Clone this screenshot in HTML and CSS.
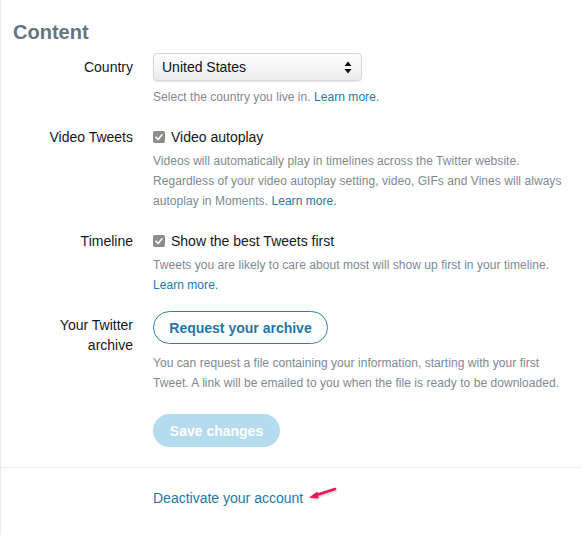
FILE: index.html
```html
<!DOCTYPE html>
<html>
<head>
<meta charset="utf-8">
<link rel="stylesheet" href="styles.css">
</head>
<body>
<div class="page">
  <h2 class="title">Content</h2>
  <div class="form">
    <div class="row row-country">
      <div class="label">Country</div>
      <div class="control">
        <div class="select">
          <span>United States</span>
          <svg class="select-arrows" width="8" height="13" viewBox="0 0 8 13"><path d="M4 0.5 L7.5 5 L0.5 5 Z M4 12.5 L7.5 8 L0.5 8 Z" fill="#111"/></svg>
        </div>
        <p class="help">Select the country you live in. <a class="link" href="#">Learn more.</a></p>
      </div>
    </div>

    <div class="row row-gap">
      <div class="label">Video Tweets</div>
      <div class="control">
        <div class="check">
          <span class="box"><svg width="12" height="12" viewBox="0 0 12 12"><path d="M3 6.2 L5.1 8.4 L9 3.8" fill="none" stroke="#fff" stroke-width="1.6" stroke-linecap="round" stroke-linejoin="round"/></svg></span>
          <span>Video autoplay</span>
        </div>
        <p class="help help-tight">Videos will automatically play in timelines across the Twitter website. Regardless of your video autoplay setting, video, GIFs and Vines will always autoplay in Moments. <a class="link" href="#">Learn more.</a></p>
      </div>
    </div>

    <div class="row row-gap">
      <div class="label">Timeline</div>
      <div class="control">
        <div class="check">
          <span class="box"><svg width="12" height="12" viewBox="0 0 12 12"><path d="M3 6.2 L5.1 8.4 L9 3.8" fill="none" stroke="#fff" stroke-width="1.6" stroke-linecap="round" stroke-linejoin="round"/></svg></span>
          <span>Show the best Tweets first</span>
        </div>
        <p class="help help-tight">Tweets you are likely to care about most will show up first in your timeline. <a class="link" href="#">Learn more.</a></p>
      </div>
    </div>

    <div class="row row-archive">
      <div class="label label-btn">Your Twitter<br>archive</div>
      <div class="control">
        <button class="btn-outline">Request your archive</button>
        <p class="help help-archive">You can request a file containing your information, starting with your first Tweet. A link will be emailed to you when the file is ready to be downloaded.</p>
      </div>
    </div>

    <div class="row row-save">
      <div></div>
      <div class="control">
        <button class="btn-save">Save changes</button>
      </div>
    </div>
  </div>
  <div class="footer">
    <div></div>
    <div class="footer-control">
      <a class="link deact" href="#">Deactivate your account</a>
      <svg class="arrow" width="34" height="18" viewBox="0 0 34 18"><g filter="url(#sh)"><path d="M29 3 L9 9.5" stroke="#e8175d" stroke-width="2.6" stroke-linecap="round"/><path d="M3 11.5 L11.5 5.5 L12.5 12.5 Z" fill="#e8175d"/></g><defs><filter id="sh" x="-20%" y="-30%" width="140%" height="170%"><feDropShadow dx="0.5" dy="1" stdDeviation="0.8" flood-color="#000" flood-opacity="0.3"/></filter></defs></svg>
    </div>
  </div>
</div>
</body>
</html>
```

FILE: styles.css
```css
html, body {
  margin: 0;
  padding: 0;
  background: #fff;
}
body {
  font-family: "Liberation Sans", Arial, Helvetica, sans-serif;
  color: #14171a;
}
.page {
  border-left: 1px solid #e6ecf0;
  min-height: 535px;
  box-sizing: border-box;
}
.title {
  margin: 0;
  padding: 20px 0 0 12px;
  font-size: 20px;
  line-height: 24px;
  font-weight: bold;
  color: #66757f;
}
.form {
  padding-bottom: 20px;
}
.row {
  display: grid;
  grid-template-columns: 132px 1fr;
  column-gap: 20px;
}
.row-country { margin-top: 9px; }
.row-gap { margin-top: 20px; }
.row-archive { margin-top: 16px; }
.row-save { margin-top: 21px; }
.label {
  font-size: 14px;
  line-height: 20px;
  text-align: right;
  color: #14171a;
}
.row-country .label { padding-top: 4px; }
.label-btn { padding-top: 4px; }
.control {
  min-width: 0;
  padding-right: 8px;
}
.select {
  width: 209px;
  height: 28px;
  box-sizing: border-box;
  border: 1px solid #d6d6d6;
  border-radius: 4px;
  background: linear-gradient(#ffffff, #ebebeb);
  box-shadow: 0 1px 1px rgba(0,0,0,0.08);
  display: flex;
  align-items: center;
  justify-content: space-between;
  padding: 0 9px 0 8px;
  font-size: 14px;
  color: #111;
}
.help {
  margin: 6px 0 0;
  font-size: 12px;
  line-height: 20px;
  letter-spacing: 0.05px;
  color: #7e8992;
}
.help-tight { margin-top: 4px; }
.help-archive { margin-top: 9px; }
.link {
  color: #2179ad;
  text-decoration: none;
}
.check {
  display: flex;
  align-items: center;
  gap: 6px;
  font-size: 14px;
  line-height: 20px;
  color: #14171a;
}
.box {
  width: 12px;
  height: 12px;
  border-radius: 2px;
  background: #8c8c8c;
  display: flex;
}
.btn-outline {
  height: 33px;
  width: 175px;
  box-sizing: border-box;
  border: 1px solid #2b80b0;
  border-radius: 100px;
  background: #fff;
  color: #1f77a8;
  font-family: inherit;
  font-weight: bold;
  font-size: 14px;
  line-height: 20px;
  padding: 0;
}
.btn-save {
  height: 33px;
  width: 127px;
  box-sizing: border-box;
  border: none;
  border-radius: 100px;
  background: #b5dcee;
  color: #fff;
  font-family: inherit;
  font-weight: bold;
  font-size: 14px;
  line-height: 20px;
  padding: 0;
}
.footer {
  border-top: 1px solid #e6ecf0;
  display: grid;
  grid-template-columns: 132px 1fr;
  column-gap: 20px;
  padding-top: 20px;
}
.footer-control {
  display: flex;
  align-items: flex-start;
}
.deact {
  font-size: 14px;
  line-height: 20px;
}
.arrow {
  margin-left: 3px;
  margin-top: -2px;
}
```
